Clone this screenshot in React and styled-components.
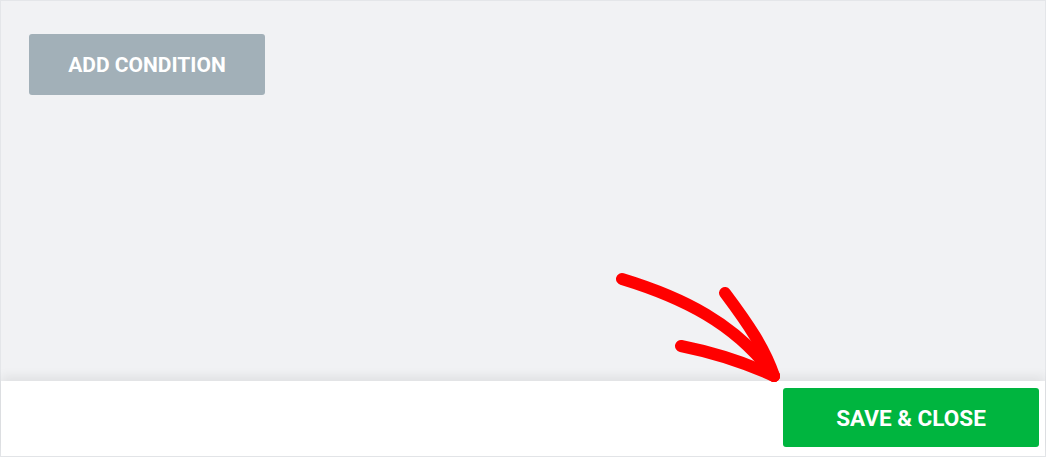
import React from 'react'
import styled, { createGlobalStyle } from 'styled-components'

const Global = createGlobalStyle`
  html, body {
    margin: 0;
    padding: 0;
    background: #ffffff;
  }
  #root {
    height: 457px;
  }
`

const Frame = styled.div`
  position: relative;
  box-sizing: border-box;
  height: 457px;
  width: 1046px;
  display: flex;
  flex-direction: column;
  border: 1px solid #e4e6e9;
  font-family: Roboto, 'Liberation Sans', sans-serif;
`

const Body = styled.div`
  flex: 1;
  background: #f1f2f4;
  padding: 33px 28px;
`

const Footer = styled.div`
  position: relative;
  height: 75px;
  box-sizing: border-box;
  background: #ffffff;
  display: flex;
  justify-content: flex-end;
  align-items: flex-start;
  padding: 7px 6px 0 0;
  box-shadow: 0 -5px 10px rgba(0, 0, 0, 0.07);
`

const Button = styled.button`
  border: none;
  border-radius: 3px;
  color: #ffffff;
  font-family: Roboto, 'Liberation Sans', sans-serif;
  font-weight: 700;
  text-transform: uppercase;
  cursor: pointer;
  width: ${p => p.$w}px;
  height: ${p => p.$h}px;
  font-size: ${p => p.$size}px;
  background: ${p => p.$bg};
  padding: 0;
`

const Arrow = styled.svg`
  position: absolute;
  left: 0;
  top: 0;
  pointer-events: none;
`

export default function App() {
  return (
    <>
      <Global />
      <Frame>
        <Body>
          <Button $w={236} $h={61} $size={21} $bg="#a2b0b8">
            Add Condition
          </Button>
        </Body>
        <Footer>
          <Button $w={256} $h={59} $size={22.5} $bg="#00b53f">
            Save &amp; Close
          </Button>
        </Footer>
        <Arrow width="1046" height="457" viewBox="0 0 1046 457">
          <g fill="none" stroke="#ff0000" strokeWidth="12" strokeLinecap="round">
            <path d="M621 278 C 680 296, 735 322, 773 375" />
            <path d="M724 292 C 748 324, 764 348, 773 375" />
            <path d="M680 345 C 715 352, 745 362, 773 375" />
          </g>
        </Arrow>
      </Frame>
    </>
  )
}
